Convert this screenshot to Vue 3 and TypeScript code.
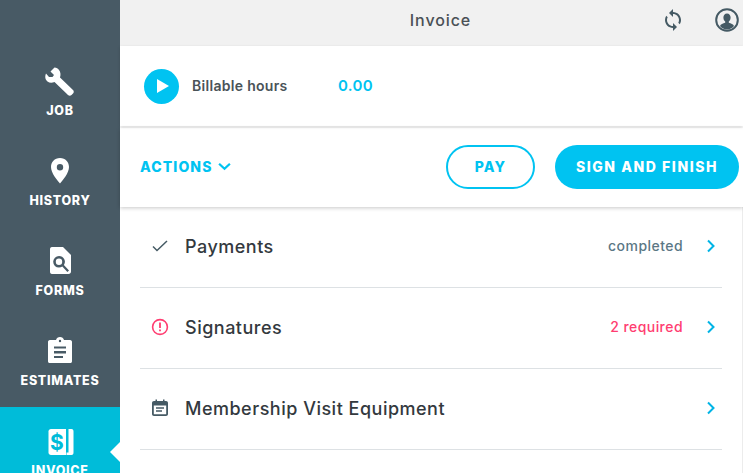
<script setup lang="ts">
const navItems = [
  { label: 'JOB', icon: 'job', active: false },
  { label: 'HISTORY', icon: 'history', active: false },
  { label: 'FORMS', icon: 'forms', active: false },
  { label: 'ESTIMATES', icon: 'estimates', active: false },
  { label: 'INVOICE', icon: 'invoice', active: true },
];

const rows = [
  { title: 'Payments', icon: 'check', status: 'completed', tone: 'done' },
  { title: 'Signatures', icon: 'alert', status: '2 required', tone: 'warn' },
  { title: 'Membership Visit Equipment', icon: 'calendar', status: '', tone: '' },
];
</script>

<template>
  <div class="app">
    <aside class="sidebar">
      <div v-for="item in navItems" :key="item.label" class="nav-item" :class="{ active: item.active }">
        <svg class="nav-icon" viewBox="0 0 32 32" width="32" height="32">
          <path
            v-if="item.icon === 'job'"
            fill="#fff"
            d="M10.5 1.5 L6.5 5.500 L10 9 L8.500 11 L5 11 L2 7.500 C0.500 11 1.500 14 3.500 15.500 C5.500 17 8 17 10.500 16 L24 29 C25 30 26.500 30 27.500 29 L29 27.500 C30 26.500 30 25 29 24 L16 11.500 C17 8.500 16.500 6 15 4 C14 2.500 12.500 1.500 10.500 1.500 Z"
          />
          <path
            v-else-if="item.icon === 'history'"
            fill="#fff"
            fill-rule="evenodd"
            d="M16 2 C10.500 2 7 6 7 11 C7 17 13 24 16 27.500 C19 24 25 17 25 11 C25 6 21.500 2 16 2 Z M16 8 A3.200 3.200 0 1 1 16 14.400 A3.200 3.200 0 1 1 16 8 Z"
          />
          <path
            v-else-if="item.icon === 'forms'"
            fill="#fff"
            fill-rule="evenodd"
            d="M8 1 H19 L27 9 V25.500 C27 27 26 28 24.500 28 H8 C6.500 28 6 27 6 25.500 V3.500 C6 2 6.500 1 8 1 Z M15 10 A5.800 5.800 0 1 0 15 21.600 A5.800 5.800 0 0 0 18.300 20.500 L23.400 26 L25 24.400 L19.900 19 A5.800 5.800 0 0 0 15 10 Z M15 12.600 A3.200 3.200 0 1 1 15 19 A3.200 3.200 0 1 1 15 12.600 Z"
          />
          <path
            v-else-if="item.icon === 'estimates'"
            fill="#fff"
            fill-rule="evenodd"
            d="M6 4 H12 C12.500 2 14 1 16 1 C18 1 19.500 2 20 4 H26 C27.500 4 28 5 28 6 V25 C28 26.500 27.500 27 26 27 H6 C4.500 27 4 26.500 4 25 V6 C4 5 4.500 4 6 4 Z M14.800 5 A1.200 1.200 0 1 0 17.200 5 A1.200 1.200 0 1 0 14.800 5 Z M10 10.500 V12.500 H22 V10.500 Z M10 15 V17.500 H22 V15 Z M10 20 V22 H19 V20 Z"
          />
          <template v-else>
            <path fill="#fff" d="M7 3 H22 V29 H7 C5.500 29 4.500 28 4.500 26.500 V5.500 C4.500 4 5.500 3 7 3 Z" />
            <path fill="#fff" d="M24.500 3 H27.500 C29 3 29.500 4 29.500 5.500 V26.500 C29.500 28 29 29 27.500 29 H22.500 V26.500 H24.500 Z" />
            <text x="13" y="23.500" class="dollar">$</text>
          </template>
        </svg>
        <span class="nav-label">{{ item.label }}</span>
        <span v-if="item.active" class="nav-notch"></span>
      </div>
    </aside>

    <main class="content">
      <header class="topbar">
        <h1 class="title">Invoice</h1>
        <svg class="sync" viewBox="0 0 24 24" width="24" height="24">
          <path
            fill="#455a64"
            d="M12 4 V1 L8 5 L12 9 V6 C15.310 6 18 8.690 18 12 C18 13 17.750 13.970 17.300 14.800 L18.760 16.260 C19.540 15.030 20 13.570 20 12 C20 7.580 16.420 4 12 4 Z M12 18 C8.690 18 6 15.310 6 12 C6 11 6.250 10.030 6.700 9.200 L5.240 7.740 C4.460 8.970 4 10.430 4 12 C4 16.420 7.580 20 12 20 V23 L16 19 L12 15 Z"
          />
        </svg>
        <svg class="avatar" viewBox="0 0 24 24" width="24" height="24">
          <circle cx="12" cy="12" r="10.800" fill="none" stroke="#455a64" stroke-width="2" />
          <path fill="#455a64" d="M12 5.500 C14.200 5.500 15.600 7.300 15.600 9.500 C15.600 11.300 14.900 12.800 13.800 13.500 V14.800 C16 15.500 18.400 16.300 19 18 C17.300 20 14.800 21.500 12 21.500 C9.200 21.500 6.700 20 5 18 C5.600 16.300 8 15.500 10.200 14.800 V13.500 C9.100 12.800 8.400 11.300 8.400 9.500 C8.400 7.300 9.800 5.500 12 5.500 Z" />
        </svg>
      </header>

      <section class="timer">
        <button class="play" type="button">
          <svg viewBox="0 0 12 14" width="12" height="14"><path fill="#fff" d="M0 0 L12 7 L0 14 Z" /></svg>
        </button>
        <span class="timer-label">Billable hours</span>
        <span class="timer-value">0.00</span>
      </section>

      <section class="actions">
        <span class="actions-menu">
          ACTIONS
          <svg viewBox="0 0 14 9" width="13" height="9">
            <path fill="none" stroke="#00c3f1" stroke-width="2.400" d="M1.200 1.500 L7 7 L12.800 1.500" />
          </svg>
        </span>
        <div class="buttons">
          <button class="btn btn-outline" type="button">PAY</button>
          <button class="btn btn-solid" type="button">SIGN AND FINISH</button>
        </div>
      </section>

      <ul class="rows">
        <li v-for="row in rows" :key="row.title" class="row">
          <svg class="row-icon" viewBox="0 0 20 20" width="20" height="20">
            <path
              v-if="row.icon === 'check'"
              fill="none"
              stroke="#455a64"
              stroke-width="1.500"
              d="M3 10.500 L7 14.500 L17 5"
            />
            <template v-else-if="row.icon === 'alert'">
              <circle cx="10" cy="10" r="7.400" fill="none" stroke="#ff3d71" stroke-width="1.600" />
              <path fill="#ff3d71" d="M9.100 5.500 H10.900 V11 H9.100 Z M9.100 12.500 H10.900 V14.300 H9.100 Z" />
            </template>
            <path
              v-else
              fill="#455a64"
              fill-rule="evenodd"
              d="M5.500 1.500 H7 V3 H13 V1.500 H14.500 V3 H16 C17.200 3 18 3.800 18 5 V16 C18 17.200 17.200 18 16 18 H4 C2.800 18 2 17.200 2 16 V5 C2 3.800 2.800 3 4 3 H5.500 Z M3.800 7.500 V16.200 H16.200 V7.500 Z M6 9.300 H14 V10.800 H6 Z M6 12.300 H12 V13.800 H6 Z"
            />
          </svg>
          <span class="row-title">{{ row.title }}</span>
          <span class="row-status" :class="row.tone">{{ row.status }}</span>
          <svg class="row-arrow" viewBox="0 0 10 14" width="10" height="14">
            <path fill="none" stroke="#00b4e6" stroke-width="2" d="M2 1.500 L7.500 7 L2 12.500" />
          </svg>
        </li>
      </ul>
    </main>
  </div>
</template>

<style>
html,
body {
  margin: 0;
  overflow: hidden;
  background: #fff;
}
</style>

<style scoped>
.app {
  display: flex;
  width: 743px;
  height: 473px;
  overflow: hidden;
  font-family: Inter, "Liberation Sans", sans-serif;
  color: #3a4248;
}

.sidebar {
  flex: 0 0 120px;
  padding-top: 47px;
  background: #485a65;
  box-sizing: border-box;
}

.nav-item {
  position: relative;
  display: flex;
  flex-direction: column;
  align-items: center;
  height: 90px;
  padding-top: 19px;
  box-sizing: border-box;
  color: #fff;
}

.nav-item.active {
  background: #00bcd9;
}

.nav-icon {
  display: block;
}

.nav-label {
  margin-top: 6px;
  font-size: 12.5px;
  line-height: 14px;
  font-weight: 800;
  letter-spacing: 0.7px;
}

.nav-notch {
  position: absolute;
  right: 0;
  top: 35px;
  border-top: 10px solid transparent;
  border-bottom: 10px solid transparent;
  border-right: 10px solid #fff;
}

.dollar {
  font-family: Inter, sans-serif;
  font-size: 21px;
  font-weight: 700;
  fill: #00bcd9;
  text-anchor: middle;
}

.content {
  display: flex;
  flex-direction: column;
  flex: 1;
  min-width: 0;
}

.topbar {
  position: relative;
  display: flex;
  align-items: center;
  justify-content: center;
  flex: 0 0 46px;
  padding-left: 18px;
  background: #f1f1f1;
}

.title {
  margin: 0 0 6px;
  font-size: 16px;
  font-weight: 500;
  letter-spacing: 0.9px;
  color: #4a5055;
}

.sync {
  position: absolute;
  left: 541px;
  top: 8px;
}

.avatar {
  position: absolute;
  left: 595px;
  top: 8px;
}

.timer {
  display: flex;
  align-items: center;
  flex: 0 0 80px;
  padding-left: 24px;
  box-sizing: border-box;
  box-shadow: 0 1px 3px rgba(0, 0, 0, 0.14);
  position: relative;
}

.play {
  display: flex;
  align-items: center;
  justify-content: center;
  width: 35px;
  height: 35px;
  padding: 0 0 0 2px;
  border: 0;
  border-radius: 50%;
  background: #00c3f1;
}

.timer-label {
  width: 146px;
  margin-left: 13px;
  margin-bottom: 1px;
  font-size: 14px;
  font-weight: 600;
  letter-spacing: 0.3px;
  color: #4a5358;
}

.timer-value {
  margin-bottom: 1px;
  font-size: 15px;
  font-weight: 600;
  letter-spacing: 0.3px;
  color: #00c3f1;
}

.actions {
  position: relative;
  display: flex;
  align-items: center;
  justify-content: space-between;
  flex: 0 0 79px;
  margin-top: 2px;
  padding: 0 4px 2px 20px;
  box-sizing: border-box;
  box-shadow: 0 1px 4px rgba(0, 0, 0, 0.22);
}

.actions-menu {
  display: flex;
  align-items: center;
  gap: 5px;
  font-size: 14px;
  font-weight: 800;
  letter-spacing: 1.1px;
  color: #00c3f1;
}

.buttons {
  display: flex;
  gap: 20px;
}

.btn {
  height: 44px;
  border-radius: 22px;
  font-family: inherit;
  font-size: 14px;
  font-weight: 800;
  letter-spacing: 1.2px;
}

.btn-outline {
  width: 89px;
  background: #fff;
  border: 2px solid #00c3f1;
  color: #00c3f1;
}

.btn-solid {
  width: 184px;
  background: #00c3f1;
  border: 0;
  color: #fff;
  letter-spacing: 1.55px;
}

.rows {
  flex: 1;
  min-height: 0;
  margin: 0;
  padding: 0 20px 0 20px;
  border-right: 1px solid #ececec;
  list-style: none;
}

.row {
  display: flex;
  align-items: center;
  height: 81px;
  padding-bottom: 2px;
  border-bottom: 1px solid #dde1e4;
  box-sizing: border-box;
}

.row-icon {
  flex: 0 0 20px;
  margin-left: 10px;
}

.row-title {
  flex: 1;
  margin-left: 15px;
  font-size: 18px;
  font-weight: 500;
  letter-spacing: 0.5px;
  color: #33393e;
}

.row-status {
  margin-right: 23px;
  margin-bottom: 1px;
  font-size: 14px;
  font-weight: 500;
  letter-spacing: 0.45px;
}

.row-status.done {
  color: #5b7785;
}

.row-status.warn {
  color: #ff3d71;
}

.row-arrow {
  margin-right: 6px;
}
</style>
